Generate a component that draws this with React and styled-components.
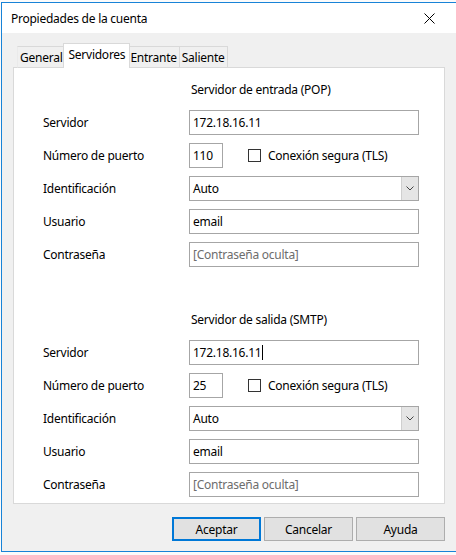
import React from "react";
import styled, { createGlobalStyle } from "styled-components";

const Global = createGlobalStyle`
  html, body {
    margin: 0;
    padding: 0;
    background: #fbfbfb;
    overflow: hidden;
  }
  body {
    font-family: "Noto Sans", "Open Sans", sans-serif;
    font-size: 12px;
    letter-spacing: -0.25px;
    color: #000;
  }
`;

const Window = styled.div`
  margin: 2px 0 0 1px;
  width: 470px;
  height: 548px;
  border: 1px solid #1883d7;
  border-right: none;
  background: #f0f0f0;
  display: flex;
  flex-direction: column;
`;

const TitleRow = styled.div`
  background: #fff;
`;

const TitleBar = styled.div`
  height: 30px;
  width: 453px;
  box-sizing: border-box;
  padding: 0 20px 0 9px;
  display: flex;
  align-items: center;
  justify-content: space-between;
`;

const Title = styled.span`
  font-size: 12px;
`;

const Body = styled.div`
  width: 432px;
  padding: 11px 0 0 11px;
  display: flex;
  flex-direction: column;
`;

const TabList = styled.div`
  display: flex;
  align-items: flex-end;
  height: 24px;
  padding-left: 4px;
  margin-bottom: -1px;
`;

const Tab = styled.div`
  position: relative;
  box-sizing: border-box;
  height: ${(p) => (p.$active ? "25px" : "22px")};
  padding: ${(p) => (p.$active ? "2px 4px 0" : "2px 2px 0")};
  margin: ${(p) => (p.$active ? "0 -2px" : "0")};
  z-index: ${(p) => (p.$active ? 2 : 1)};
  background: ${(p) => (p.$active ? "#fff" : "#f0f0f0")};
  border: 1px solid #d9d9d9;
  border-bottom: ${(p) => (p.$active ? "none" : "1px solid #d9d9d9")};
  border-left: ${(p) => (p.$first ? "1px solid #eaeaea" : p.$active ? "1px solid #d9d9d9" : "none")};
  font-size: 12px;
  line-height: 17px;
  white-space: nowrap;
`;

const Panel = styled.div`
  height: 437px;
  box-sizing: border-box;
  background: #fff;
  border: 1px solid #d9d9d9;
  padding: 14px 0 0 29px;
  display: flex;
  flex-direction: column;
`;

const Section = styled.div`
  display: grid;
  grid-template-columns: 146px 230px;
  row-gap: 8px;
  margin-bottom: ${(p) => p.$gap || 0}px;
`;

const SectionTitle = styled.div`
  grid-column: 2;
  padding-left: 2px;
  line-height: 16px;
  margin-bottom: 4px;
`;

const Label = styled.div`
  display: flex;
  align-items: center;
  height: 25px;
`;

const Field = styled.div`
  box-sizing: border-box;
  height: 25px;
  width: ${(p) => p.$width || "230px"};
  border: 1px solid #a6a6a6;
  background: #fff;
  display: flex;
  align-items: center;
  padding-left: 3px;
  color: ${(p) => (p.$placeholder ? "#6d6d6d" : "#000")};
`;

const Caret = styled.span`
  display: inline-block;
  width: 1px;
  height: 15px;
  background: #000;
  margin-left: 1px;
`;

const PortRow = styled.div`
  display: flex;
  align-items: center;
`;

const Check = styled.label`
  display: flex;
  align-items: center;
  margin-left: 25px;
  gap: 7px;
`;

const Box = styled.span`
  width: 13px;
  height: 13px;
  box-sizing: border-box;
  border: 1px solid #333;
  background: #fff;
`;

const Select = styled(Field)`
  justify-content: space-between;
`;

const DropButton = styled.div`
  width: 16px;
  height: 23px;
  background: #e5e5e5;
  border-left: 1px solid #cfcfcf;
  display: flex;
  align-items: center;
  justify-content: center;
`;

const Buttons = styled.div`
  display: flex;
  justify-content: flex-end;
  gap: 3px;
  margin-top: 13px;
`;

const Button = styled.div`
  box-sizing: border-box;
  width: 89px;
  height: 24px;
  background: #e1e1e1;
  border: ${(p) => (p.$default ? "2px solid #0078d7" : "1px solid #adadad")};
  display: flex;
  align-items: center;
  justify-content: center;
`;

const Chevron = () => (
  <svg width="8" height="5" viewBox="0 0 8 5">
    <path d="M0.5 0.5 L4 4 L7.5 0.5" fill="none" stroke="#444" strokeWidth="1" />
  </svg>
);

const Close = () => (
  <svg width="11" height="11" viewBox="0 0 11 11">
    <path d="M0.5 0.5 L10.5 10.5 M10.5 0.5 L0.5 10.5" stroke="#000" strokeWidth="1" />
  </svg>
);

function ServerSection({ title, port, gap, caret }) {
  return (
    <Section $gap={gap}>
      <SectionTitle>{title}</SectionTitle>
      <Label>Servidor</Label>
      <Field>
        172.18.16.11
        {caret && <Caret />}
      </Field>
      <Label>Número de puerto</Label>
      <PortRow>
        <Field $width="34px">{port}</Field>
        <Check>
          <Box />
          Conexión segura (TLS)
        </Check>
      </PortRow>
      <Label>Identificación</Label>
      <Select>
        Auto
        <DropButton>
          <Chevron />
        </DropButton>
      </Select>
      <Label>Usuario</Label>
      <Field>email</Field>
      <Label>Contraseña</Label>
      <Field $placeholder>[Contraseña oculta]</Field>
    </Section>
  );
}

export default function App() {
  return (
    <>
      <Global />
      <Window>
        <TitleRow>
          <TitleBar>
            <Title>Propiedades de la cuenta</Title>
            <Close />
          </TitleBar>
        </TitleRow>
        <Body>
          <TabList>
            <Tab $first>General</Tab>
            <Tab $active>Servidores</Tab>
            <Tab>Entrante</Tab>
            <Tab>Saliente</Tab>
          </TabList>
          <Panel>
            <ServerSection title="Servidor de entrada (POP)" port="110" gap={45} />
            <ServerSection title="Servidor de salida (SMTP)" port="25" caret />
          </Panel>
          <Buttons>
            <Button $default>Aceptar</Button>
            <Button>Cancelar</Button>
            <Button>Ayuda</Button>
          </Buttons>
        </Body>
      </Window>
    </>
  );
}
